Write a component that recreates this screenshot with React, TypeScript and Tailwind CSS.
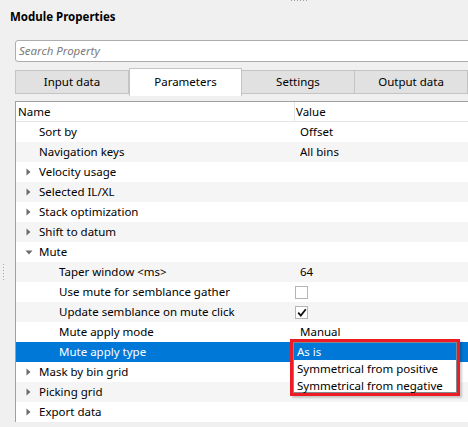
import React from "react";

const font = { fontFamily: '"Noto Sans", "Open Sans", sans-serif' };

type Row = {
  name: string;
  level: 0 | 1;
  arrow?: "right" | "down";
  value?: React.ReactNode;
  alt: boolean;
  selected?: boolean;
};

function ArrowRight() {
  return (
    <svg width="5" height="8" viewBox="0 0 5 8" className="shrink-0">
      <path d="M0.5 0.5 L4.5 4 L0.5 7.5 Z" fill="#6b6b6b" />
    </svg>
  );
}
function ArrowDown() {
  return (
    <svg width="8" height="5" viewBox="0 0 8 5" className="shrink-0">
      <path d="M0.5 0.5 L7.5 0.5 L4 4.5 Z" fill="#6b6b6b" />
    </svg>
  );
}

function Checkbox({ checked }: { checked: boolean }) {
  return (
    <div className="w-[13px] h-[13px] border border-[#b5b5b5] bg-white flex items-center justify-center">
      {checked && (
        <svg width="10" height="9" viewBox="0 0 10 9">
          <path d="M1.2 4.6 L3.8 7.6 L8.8 1.2" stroke="#111" strokeWidth="1.8" fill="none" />
        </svg>
      )}
    </div>
  );
}

const rows: Row[] = [
  { name: "Sort by", level: 0, value: "Offset", alt: false },
  { name: "Navigation keys", level: 0, value: "All bins", alt: true },
  { name: "Velocity usage", level: 0, arrow: "right", alt: false },
  { name: "Selected IL/XL", level: 0, arrow: "right", alt: true },
  { name: "Stack optimization", level: 0, arrow: "right", alt: false },
  { name: "Shift to datum", level: 0, arrow: "right", alt: true },
  { name: "Mute", level: 0, arrow: "down", alt: false },
  { name: "Taper window <ms>", level: 1, value: "64", alt: true },
  { name: "Use mute for semblance gather", level: 1, value: <Checkbox checked={false} />, alt: false },
  { name: "Update semblance on mute click", level: 1, value: <Checkbox checked={true} />, alt: true },
  { name: "Mute apply mode", level: 1, value: "Manual", alt: false },
  { name: "Mute apply type", level: 1, alt: true, selected: true },
  { name: "Mask by bin grid", level: 0, arrow: "right", alt: false },
  { name: "Picking grid", level: 0, arrow: "right", alt: true },
  { name: "Export data", level: 0, arrow: "right", alt: false },
];

export default function App() {
  return (
    <div
      className="relative w-[468px] h-[427px] bg-[#f0f0f0] overflow-hidden text-[11.5px] text-black"
      style={font}
    >
      {/* top splitter dots */}
      <div className="absolute top-0 left-[291px] flex gap-[2px]">
        {Array.from({ length: 6 }).map((_, i) => (
          <div key={i} className="w-[1px] h-[1px] bg-[#a0a0a0]" />
        ))}
      </div>

      {/* title */}
      <div className="h-[40px] pl-[10px] pt-[9px] font-bold text-[11.5px] leading-[16px]">Module Properties</div>

      {/* search */}
      <div className="ml-[15px] w-[470px] h-[22px] bg-white border border-[#adadad] rounded-[3px] flex items-center pl-[3px]">
        <span className="italic text-[#7a7a7a]">Search Property</span>
      </div>

      {/* tabs */}
      <div className="mt-[6px] ml-[15px] h-[28px] flex items-end">
        <div className="w-[114px] h-[24px] mb-[2px] bg-[#e1e1e1] border border-[#c4c4c4] flex items-center justify-center">
          Input data
        </div>
        <div className="w-[113px] h-[28px] bg-white border border-b-0 border-[#c4c4c4] flex items-center justify-center pb-[2px]">
          Parameters
        </div>
        <div className="w-[113px] h-[24px] mb-[2px] bg-[#e1e1e1] border border-l-0 border-[#c4c4c4] flex items-center justify-center">
          Settings
        </div>
        <div className="w-[113px] h-[24px] mb-[2px] bg-[#e1e1e1] border border-l-0 border-[#c4c4c4] flex items-center justify-center">
          Output data
        </div>
      </div>

      {/* table area */}
      <div className="relative mt-[5px] flex">
        {/* splitter dots */}
        <div className="w-[15px] shrink-0 relative">
          <div className="absolute left-[3px] top-[163px] flex flex-col gap-[2px]">
            {Array.from({ length: 6 }).map((_, i) => (
              <div key={i} className="w-[1px] h-[1px] bg-[#a8a8a8]" />
            ))}
          </div>
        </div>
        <div className="flex-1 bg-white border-l border-t border-[#a0a0a0]">
          <div className="h-[20px] flex border-b border-[#e5e5e5]">
            <div className="w-[278px] pl-[2px] leading-[19px]">Name</div>
            <div className="flex-1 border-l border-[#e5e5e5] pl-[1px] leading-[19px]">Value</div>
          </div>
          {rows.map((r, i) => (
            <div
              key={i}
              className={`h-[20px] flex items-center ${
                r.selected ? "bg-[#0078d7] text-white" : r.alt ? "bg-[#f5f5f5]" : "bg-white"
              }`}
            >
              <div className="w-[278px] flex items-center h-full">
                <div className="w-[23px] flex items-center justify-center pl-[2px]">
                  {r.arrow === "right" && <ArrowRight />}
                  {r.arrow === "down" && <ArrowDown />}
                </div>
                <div className={r.level === 1 ? "pl-[20px]" : ""}>{r.name}</div>
              </div>
              <div className="flex-1 pl-[6px] flex items-center">
                {typeof r.value === "string" ? <span>{r.value}</span> : <div className="-ml-[5px]">{r.value}</div>}
              </div>
            </div>
          ))}
        </div>
      </div>

      {/* dropdown overlay */}
      <div className="absolute left-[290px] top-[339px] w-[170px] h-[57px] border-[3px] border-[#ed1c24] shadow-[2px_2px_2px_rgba(0,0,0,0.2)]">
        <div className="w-full h-full bg-white border border-[#828790] flex flex-col">
          <div className="h-[17px] bg-[#0078d7] text-white pl-[3px] leading-[17px]">As is</div>
          <div className="h-[17px] pl-[3px] leading-[17px]">Symmetrical from positive</div>
          <div className="h-[17px] pl-[3px] leading-[17px]">Symmetrical from negative</div>
        </div>
      </div>
    </div>
  );
}
